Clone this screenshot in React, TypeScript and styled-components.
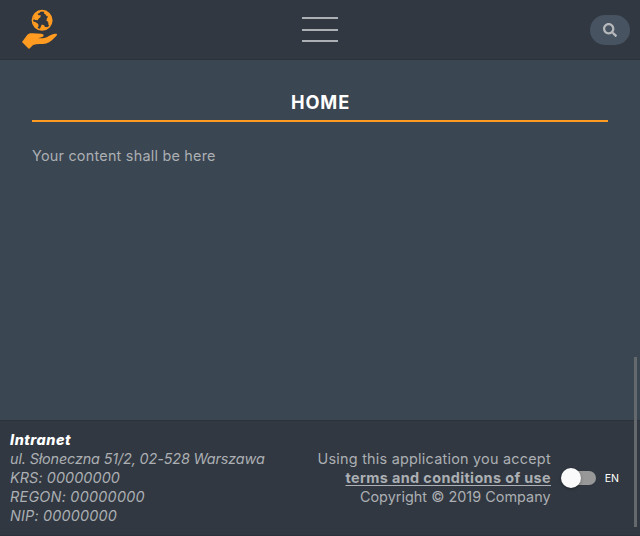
import React from "react";
import styled, { createGlobalStyle } from "styled-components";
import { FaSearch } from "react-icons/fa";

const GlobalStyle = createGlobalStyle`
  * { box-sizing: border-box; }
  html, body { margin: 0; height: 100%; overflow: hidden; }
  body {
    background: #3a4651;
    color: #acafb3;
    font-family: Inter, "Open Sans", sans-serif;
    font-size: 14.4px;
    line-height: 19px;
  }
`;

const Page = styled.div`
  position: relative;
  display: flex;
  flex-direction: column;
  height: 536px;
`;

const Header = styled.header`
  display: grid;
  grid-template-columns: 1fr auto 1fr;
  align-items: center;
  height: 60px;
  padding: 0 10px 0 20px;
  background: #313841;
  border-bottom: 1px solid #2b3239;
`;

const Logo = styled.svg`
  display: block;
  width: 40px;
  height: 42px;
`;

const MenuButton = styled.button`
  display: flex;
  flex-direction: column;
  justify-content: space-between;
  width: 36px;
  height: 25px;
  margin: 0 5px 0 -5px;
  padding: 0;
  border: 0;
  background: none;
`;

const MenuBar = styled.span`
  height: 2px;
  background: #acafb3;
`;

const SearchButton = styled.button`
  display: flex;
  align-items: center;
  justify-content: center;
  justify-self: end;
  width: 40px;
  height: 30px;
  padding: 0;
  border: 0;
  border-radius: 15px;
  background: #475361;
  color: #b6b8bb;
  font-size: 14px;
`;

const Main = styled.main`
  flex: 1;
  padding: 32px 32px 0;
`;

const Title = styled.h1`
  margin: 0 0 24px;
  height: 30px;
  border-bottom: 2px solid #ff9b20;
  color: #fff;
  font-size: 18.2px;
  font-weight: 700;
  line-height: 20px;
`;

const Line = styled.span<{ $track?: number }>`
  display: block;
  width: max-content;
  white-space: nowrap;
  letter-spacing: ${(p) => p.$track ?? 0}px;
  margin-right: ${(p) => -(p.$track ?? 0)}px;
`;

const Heading = styled(Line)`
  margin: 0 auto;
  padding-left: 1px;
`;

const Footer = styled.footer`
  display: flex;
  align-items: center;
  justify-content: space-between;
  height: 116px;
  padding: 0 21px 0 10px;
  background: #313841;
  border-top: 1px solid #2b3239;
  border-bottom: 1px solid #2b3239;
`;

const Address = styled.address`
  padding-bottom: 2px;
  font-style: italic;
`;

const Company = styled(Line)`
  color: #fff;
  font-weight: 800;
`;

const Legal = styled.div`
  display: flex;
  align-items: center;
`;

const Terms = styled.div`
  display: flex;
  flex-direction: column;
  align-items: flex-end;
  margin-right: 9.5px;
  padding-bottom: 2px;
`;

const TermsLink = styled(Line)`
  font-weight: 700;
  text-decoration: underline;
  text-decoration-thickness: 1px;
  text-underline-offset: 2px;
`;

const Switch = styled.span`
  display: flex;
  align-items: center;
  width: 34px;
  height: 14px;
  margin-left: 1.5px;
  border-radius: 7px;
  background: #989898;
`;

const Knob = styled.span`
  flex: none;
  width: 20px;
  height: 20px;
  margin-left: -1px;
  border-radius: 50%;
  background: #fafafa;
  box-shadow: 0 1px 3px rgba(0, 0, 0, 0.35);
`;

const Language = styled(Line)`
  margin-left: 9px;
  color: #fff;
  font-size: 10.6px;
`;

const ScrollThumb = styled.div`
  position: absolute;
  top: 357px;
  right: 3px;
  width: 3px;
  height: 170px;
  background: #64696e;
`;

export default function App() {
  return (
    <Page>
      <GlobalStyle />
      <Header>
        <Logo viewBox="0 0 40 42" fill="#ff9b20">
          <circle cx="22.1" cy="11.3" r="9.7" fill="none" stroke="#ff9b20" strokeWidth="1.6" />
          <path d="M13 10 14.5 5.500l3-2.700 2.600-.4-.4 1.500-2.200.9 1.100 1.500 2.200-.1-.4 2-1.600 1.300-1.200 1.800-2.300-.4-1.500-.6-.8.6z" />
          <path d="m12.600 12.400 2.800.7 2.800 1.900.4 2.100-1.400 2.300-2.600-2.200z" />
          <path d="m24.500 2.200 4.100 1.900 2.900 4.200.3 4.600-2 4-1.300-.9-.3-2.900-1.800-1.700.5-2.100 1.300-1.500-1.700-.9-1.200-1.700-1.400-.6z" />
          <path d="m20.600 18.300 1.200-2.800 2.300.8.9 1.600 2.700.1-2.300 2.100-3.500.6-2.300-.4z" />
          <path d="m2 33 5.200-7c1.100-1.500 3-1.900 5-1.700l9.200.4c2.400.2 3.100 2.300.7 3.300l-4 1.300 4.700-.1c3.500-.3 5.400-2.100 8.700-3.500 2-1 3.600-1.200 4.800-.9 1 .3.900 1.300 0 2.300-3.200 3.200-6 6.200-10 7.300-4.600 1.200-9.200-.1-13.200 1.500L9 40z" />
        </Logo>
        <MenuButton aria-label="Menu">
          <MenuBar />
          <MenuBar />
          <MenuBar />
        </MenuButton>
        <SearchButton aria-label="Search">
          <FaSearch />
        </SearchButton>
      </Header>
      <Main>
        <Title>
          <Heading $track={0.9}>HOME</Heading>
        </Title>
        <Line $track={0.23}>Your content shall be here</Line>
      </Main>
      <Footer>
        <Address>
          <Company $track={0.53}>Intranet</Company>
          <Line $track={-0.14}>ul. Słoneczna 51/2, 02-528 Warszawa</Line>
          <Line $track={0.08}>KRS: 00000000</Line>
          <Line $track={0.24}>REGON: 00000000</Line>
          <Line $track={0.18}>NIP: 00000000</Line>
        </Address>
        <Legal>
          <Terms>
            <Line $track={0.24}>Using this application you accept</Line>
            <TermsLink as="a" $track={0.38}>terms and conditions of use</TermsLink>
            <Line $track={0.03}>Copyright © 2019 Company</Line>
          </Terms>
          <Switch>
            <Knob />
          </Switch>
          <Language>EN</Language>
        </Legal>
      </Footer>
      <ScrollThumb />
    </Page>
  );
}
